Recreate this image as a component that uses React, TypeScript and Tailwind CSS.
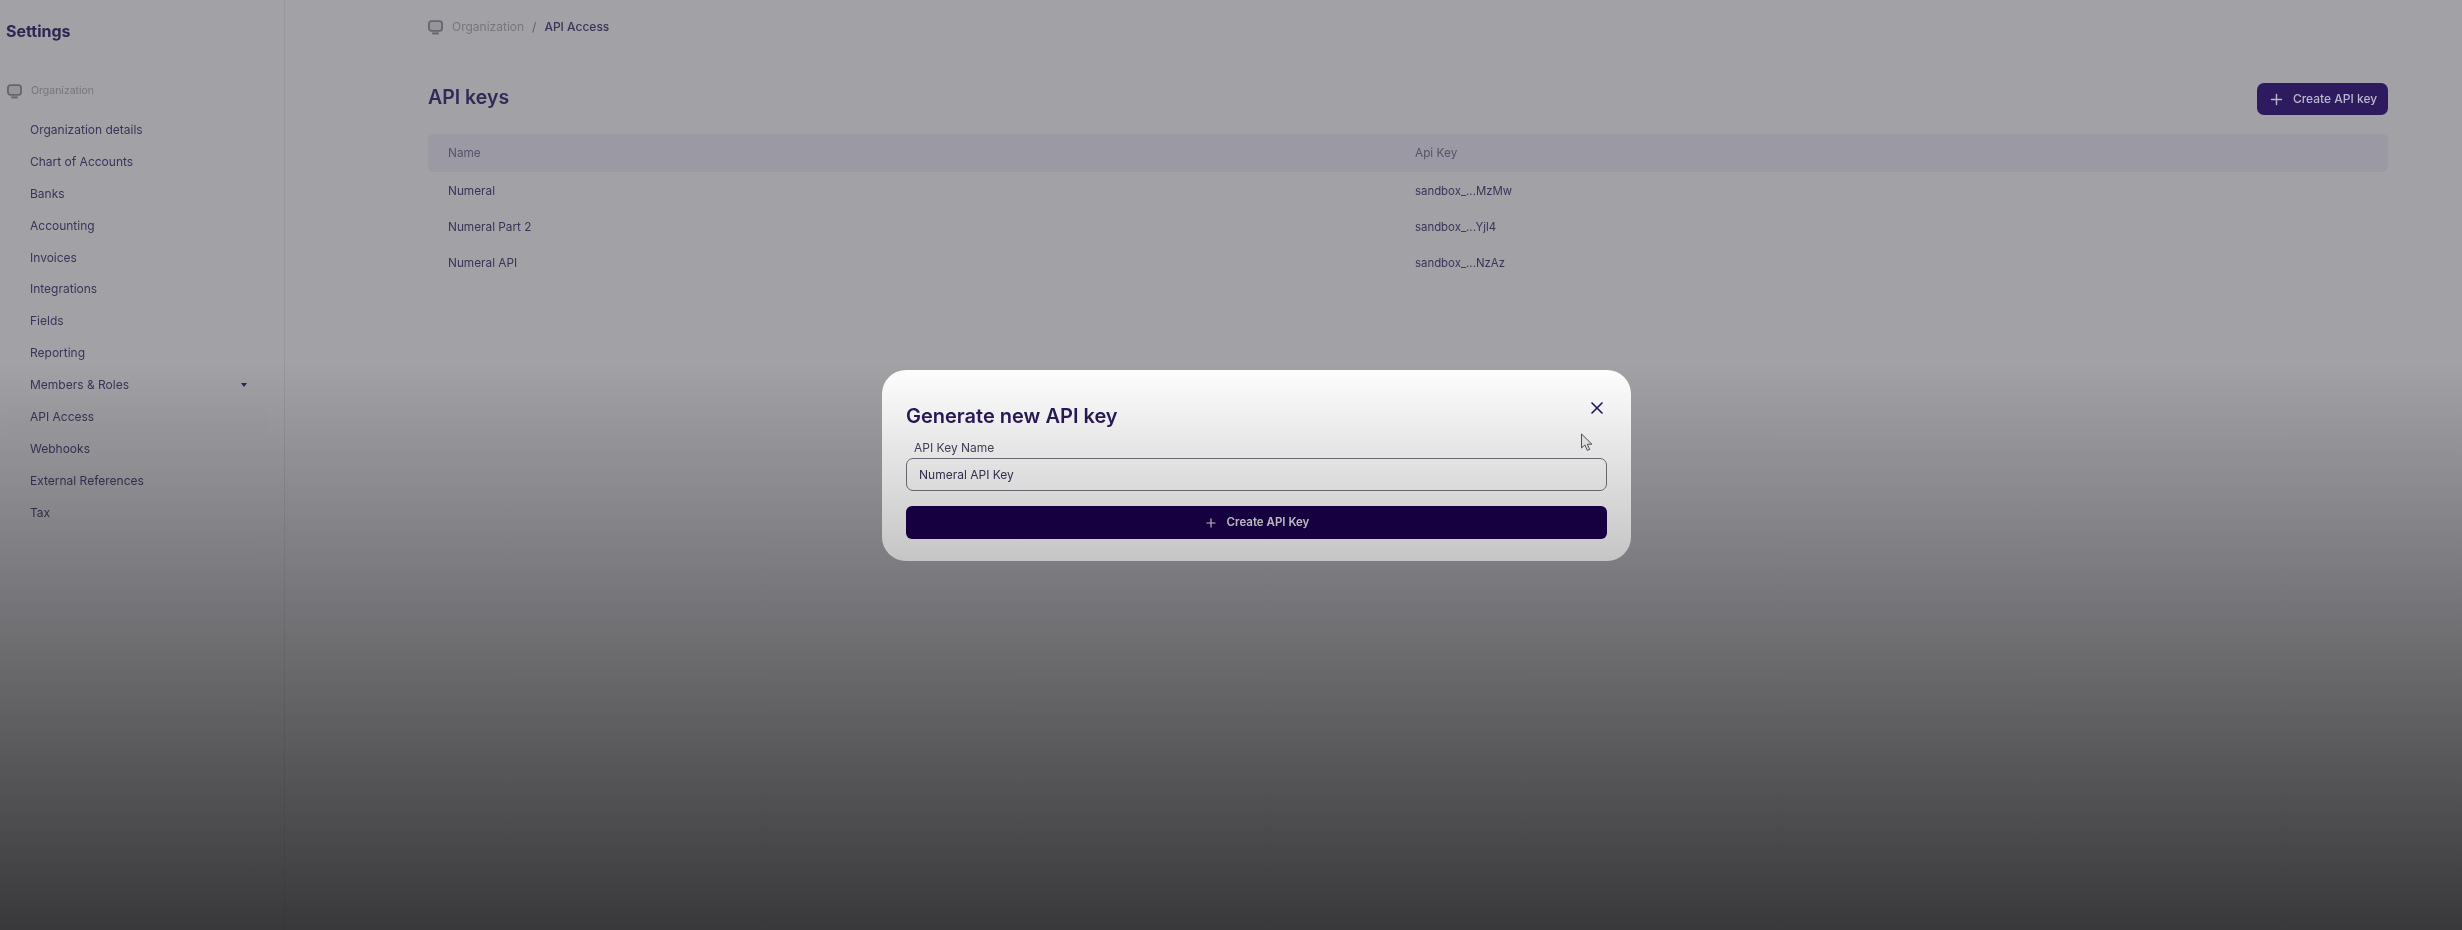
import { Plus, X } from 'lucide-react';

const navItems = [
	'Organization details',
	'Chart of Accounts',
	'Banks',
	'Accounting',
	'Invoices',
	'Integrations',
	'Fields',
	'Reporting',
	'Members & Roles',
	'API Access',
	'Webhooks',
	'External References',
	'Tax',
];

const apiKeys = [
	{ name: 'Numeral', key: 'sandbox_...MzMw' },
	{ name: 'Numeral Part 2', key: 'sandbox_...Yjl4' },
	{ name: 'Numeral API', key: 'sandbox_...NzAz' },
];

function OrgIcon({ className }: { className: string }) {
	return (
		<svg className={className} viewBox="0 0 16 16" fill="none" stroke="currentColor" strokeWidth="1.9" strokeLinejoin="round">
			<rect x="1" y="1.2" width="14" height="10.4" rx="2.8" fill="#96959b" />
			<path d="M4.5 14.3h7" strokeWidth="2.2" />
		</svg>
	);
}

function Sidebar() {
	return (
		<aside className="h-[930px] w-[285px] shrink-0 border-r border-[#97969b] pl-[6px] pt-[20px]">
			<h1 className="text-[16px] font-bold leading-[22px] text-[#2f2553]">Settings</h1>
			<div className="mt-[37px] flex h-[24px] items-center gap-[9px] pl-[1px]">
				<OrgIcon className="h-[15px] w-[15px] text-[#66656c]" />
				<span className="text-[10.5px] text-[#77767d]">Organization</span>
			</div>
			<ul className="mt-[11px] flex flex-col pr-[16px]">
				{navItems.map(item => (
					<li
						key={item}
						className={`flex h-[31.9px] items-center justify-between pl-[24px] pr-[21px] text-[12px] text-[#3b3358] ${
							item === 'API Access' ? 'rounded-md bg-[#a1a0a5]' : ''
						}`}
					>
						{item}
						{item === 'Members & Roles' && <span className="h-0 w-0 border-x-[3.5px] border-t-[4px] border-x-transparent border-t-[#2f2553]" />}
					</li>
				))}
			</ul>
		</aside>
	);
}

function Main() {
	return (
		<main className="flex-1 pl-[143px] pr-[74px] pt-[16px]">
			<nav className="flex h-[22px] items-center text-[12px]">
				<OrgIcon className="mr-[9px] h-[15px] w-[15px] text-[#66656c]" />
				<span className="text-[#77767d]">Organization</span>
				<span className="mx-[8px] text-[#5f5e66]">/</span>
				<span className="font-medium text-[#3b3358]">API Access</span>
			</nav>
			<div className="mt-[45px] flex items-center justify-between">
				<h2 className="mt-[-3px] text-[19.5px] font-semibold text-[#322958]">API keys</h2>
				<button className="flex h-[32px] w-[131px] items-center justify-center gap-[8px] rounded-[7px] bg-[#2e1a5f] text-[12px] font-medium text-[#bcb8cc]">
					<Plus className="h-[17px] w-[17px]" strokeWidth={2} />
					Create API key
				</button>
			</div>
			<table className="mt-[19px] w-full text-[11.8px] text-[#3b3358]">
				<thead>
					<tr className="h-[38px] bg-[#9b9aa4] text-left text-[#55536a]">
						<th className="w-[987px] rounded-l-md pl-[20px] pt-[2px] font-normal">Name</th>
						<th className="rounded-r-md pt-[2px] font-normal">Api Key</th>
					</tr>
				</thead>
				<tbody>
					{apiKeys.map(row => (
						<tr key={row.name} className="h-[36px]">
							<td className="pl-[20px] pt-[3px]">{row.name}</td>
							<td className="pt-[3px] text-[11.4px]">{row.key}</td>
						</tr>
					))}
				</tbody>
			</table>
		</main>
	);
}

function CreateKeyModal() {
	return (
		<div className="absolute left-[882px] top-[370px] h-[191px] w-[749px] rounded-[24px] bg-white px-[24px] pt-[31px]">
			<h3 className="text-[20px] font-semibold leading-[30px] text-[#2a1a5a]">Generate new API key</h3>
			<button className="absolute right-[24px] top-[28px] text-[#2a1a5e]" aria-label="Close">
				<X className="h-[20px] w-[20px]" strokeWidth={2} />
			</button>
			<label className="mt-[8px] block pl-[8px] text-[12px] leading-[17px] text-[#4a4560]">API Key Name</label>
			<input
				readOnly
				value="Numeral API Key"
				className="mt-[2px] block h-[33px] w-full rounded-[7px] border border-[#77767f] bg-transparent px-[12px] text-[12px] text-[#3b3358] outline-none"
			/>
			<button className="mt-[15px] flex h-[33px] w-full items-center justify-center gap-[9px] rounded-[6px] bg-[#1b004e] text-[11.5px] font-semibold text-[#e3e1ea]">
				<Plus className="h-[14px] w-[14px]" strokeWidth={2} />
				Create API Key
			</button>
			<svg className="absolute left-[698px] top-[63px]" width="14" height="20" viewBox="0 0 14 20" fill="#f4f4f4" stroke="#55555c" strokeWidth="1">
				<path d="M1.5 1v14l3.4-3 2.4 5.4 2.4-1-2.4-5.2h4.6z" />
			</svg>
		</div>
	);
}

export default function App() {
	return (
		<div className="relative h-[930px] w-[2462px] overflow-hidden bg-[#a2a1a6] font-['Inter',sans-serif] blur-[0.6px]">
			<div className="flex">
				<Sidebar />
				<Main />
			</div>
			<CreateKeyModal />
			{/* the fade to dark in the recording sits over everything, modal too */}
			<div className="pointer-events-none absolute inset-0 bg-[linear-gradient(to_bottom,rgba(0,0,0,0)_0%,rgba(0,0,0,0)_39%,rgba(0,0,0,0.65)_100%)]" />
		</div>
	);
}
